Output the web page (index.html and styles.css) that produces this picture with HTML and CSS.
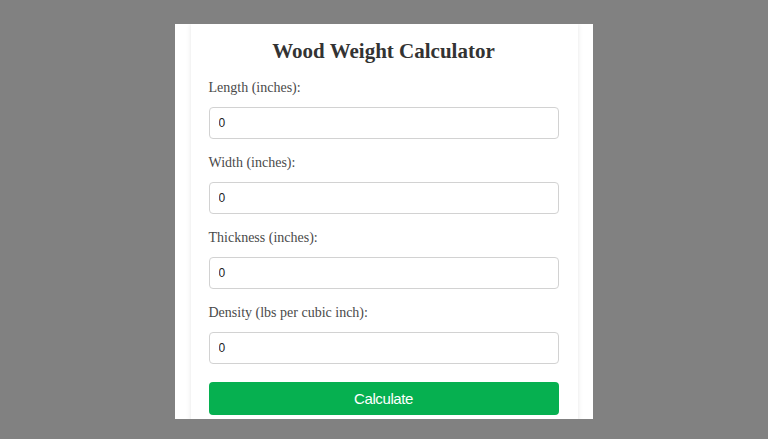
FILE: index.html
```html
<!DOCTYPE html>
<html>
<head>
<meta charset="utf-8">
<link rel="stylesheet" href="styles.css">
</head>
<body>
<div class="stage">
  <div class="panel">
    <div class="card">
      <h1 class="title">Wood Weight Calculator</h1>
      <div class="field">
        <label class="label">Length (inches):</label>
        <input class="input" type="text" value="0">
      </div>
      <div class="field">
        <label class="label">Width (inches):</label>
        <input class="input" type="text" value="0">
      </div>
      <div class="field">
        <label class="label">Thickness (inches):</label>
        <input class="input" type="text" value="0">
      </div>
      <div class="field">
        <label class="label">Density (lbs per cubic inch):</label>
        <input class="input" type="text" value="0">
      </div>
      <button class="btn">Calculate</button>
    </div>
  </div>
</div>
</body>
</html>
```

FILE: styles.css
```css
html, body {
  margin: 0;
  padding: 0;
  background: #818181;
  width: 768px;
  height: 439px;
  overflow: hidden;
}
.stage {
  display: flex;
  justify-content: center;
  padding-top: 24px;
}
.panel {
  width: 418px;
  height: 395px;
  background: #ffffff;
  overflow: hidden;
  display: flex;
  justify-content: center;
}
.card {
  width: 387px;
  box-sizing: border-box;
  padding: 0 19px 0 18px;
  background: #fff;
  box-shadow: 0 0 5px rgba(0,0,0,0.10);
  height: 420px;
}
.title {
  margin: 0;
  padding-top: 13px;
  font-family: "Liberation Serif", "Times New Roman", serif;
  font-weight: bold;
  font-size: 21px;
  line-height: 28px;
  color: #333;
  text-align: center;
}
.field {
  display: flex;
  flex-direction: column;
  margin-top: 14px;
}
.field + .field {
  margin-top: 15px;
}
.label {
  font-family: "Liberation Serif", "Times New Roman", serif;
  font-size: 14px;
  line-height: 18px;
  color: #4a4a4a;
  margin-bottom: 10px;
}
.input {
  box-sizing: border-box;
  width: 350px;
  height: 32px;
  border: 1px solid #d2d2d2;
  border-radius: 4px;
  padding: 0 9px;
  font-family: "Liberation Sans", Arial, sans-serif;
  font-size: 12px;
  color: #222;
  background: #fff;
  outline: none;
}
.btn {
  display: block;
  margin-top: 18px;
  width: 350px;
  height: 33px;
  border: none;
  border-radius: 4px;
  background: #06b050;
  color: #fff;
  font-family: "Liberation Sans", Arial, sans-serif;
  font-size: 15px;
  letter-spacing: -0.4px;
}
```
